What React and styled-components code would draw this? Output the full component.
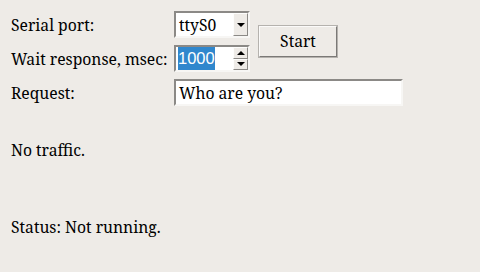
import React from "react";
import styled, { createGlobalStyle } from "styled-components";

const Global = createGlobalStyle`
  html, body { margin: 0; padding: 0; }
  body {
    background: #eeebe7;
    color: #000;
    font-family: "Noto Sans", sans-serif;
  }
`;

const Page = styled.div`
  width: 480px;
  height: 272px;
  box-sizing: border-box;
  padding: 11px 0 0 11px;
  font-family: "Noto Serif", "Liberation Serif", serif;
  font-size: 15.7px;
`;

const Form = styled.div`
  display: grid;
  grid-template-columns: 155px 76px 80px 57px;
  grid-template-rows: 27px 27px 27px;
  column-gap: 8px;
  row-gap: 7px;
  width: max-content;
`;

const Label = styled.div`
  grid-column: 1;
  grid-row: ${(p) => p.row};
  display: flex;
  align-items: center;
  white-space: nowrap;
`;

const Sunken = styled.div`
  grid-column: ${(p) => p.cols || "2"};
  grid-row: ${(p) => p.row};
  box-sizing: border-box;
  display: flex;
  align-items: stretch;
  background: #fff;
  border-style: solid;
  border-width: 2px;
  border-color: #8b8986 #f7f6f4 #f7f6f4 #8b8986;
  overflow: hidden;
`;

const FieldText = styled.div`
  flex: 1;
  display: flex;
  align-items: center;
  padding-left: ${(p) => p.pad || 3}px;
  white-space: nowrap;
`;

const Selected = styled.span`
  font-family: "Liberation Sans", sans-serif;
  font-size: 16.5px;
  background: #3087cd;
  color: #fff;
  padding: 2px 0 3px;
  line-height: 18px;
`;

const ArrowCol = styled.div`
  width: 15px;
  display: flex;
  flex-direction: column;
  background: #eeebe7;
`;

const ArrowButton = styled.div`
  flex: 1;
  box-sizing: border-box;
  display: flex;
  align-items: center;
  justify-content: center;
  border-style: solid;
  border-width: 1px;
  border-color: #fdfdfc #8b8986 #8b8986 #fdfdfc;
  background: #eeebe7;
`;

const Tri = styled.span`
  width: 0;
  height: 0;
  border-left: 4px solid transparent;
  border-right: 4px solid transparent;
  ${(p) =>
    p.up
      ? "border-bottom: 4px solid #000;"
      : "border-top: 4px solid #000;"}
`;

const StartButton = styled.button`
  grid-column: 3;
  grid-row: 1 / span 2;
  align-self: center;
  width: 80px;
  height: 33px;
  box-sizing: border-box;
  margin: 0;
  padding: 0 0 1px;
  font-family: "Noto Serif", "Liberation Serif", serif;
  font-size: 15.7px;
  color: #000;
  background: #eeebe7;
  border-style: solid;
  border-width: 2px;
  border-color: #fbfaf9 #7b7977 #7b7977 #fbfaf9;
  outline: 1px solid #b5b2ae;
  outline-offset: -1px;
`;

const Message = styled.div`
  margin-top: ${(p) => p.mt}px;
  line-height: 22.5px;
  white-space: nowrap;
`;

export default function App() {
  return (
    <>
      <Global />
      <Page>
        <Form>
          <Label row={1}>Serial port:</Label>
          <Sunken row={1}>
            <FieldText>ttyS0</FieldText>
            <ArrowCol>
              <ArrowButton>
                <Tri />
              </ArrowButton>
            </ArrowCol>
          </Sunken>
          <StartButton>Start</StartButton>

          <Label row={2}>Wait response, msec:</Label>
          <Sunken row={2}>
            <FieldText pad={2}>
              <Selected>1000</Selected>
            </FieldText>
            <ArrowCol>
              <ArrowButton>
                <Tri up />
              </ArrowButton>
              <ArrowButton>
                <Tri />
              </ArrowButton>
            </ArrowCol>
          </Sunken>

          <Label row={3}>Request:</Label>
          <Sunken row={3} cols="2 / span 3">
            <FieldText>Who are you?</FieldText>
          </Sunken>
        </Form>
        <Message mt={33}>No traffic.</Message>
        <Message mt={54}>Status: Not running.</Message>
      </Page>
    </>
  );
}
